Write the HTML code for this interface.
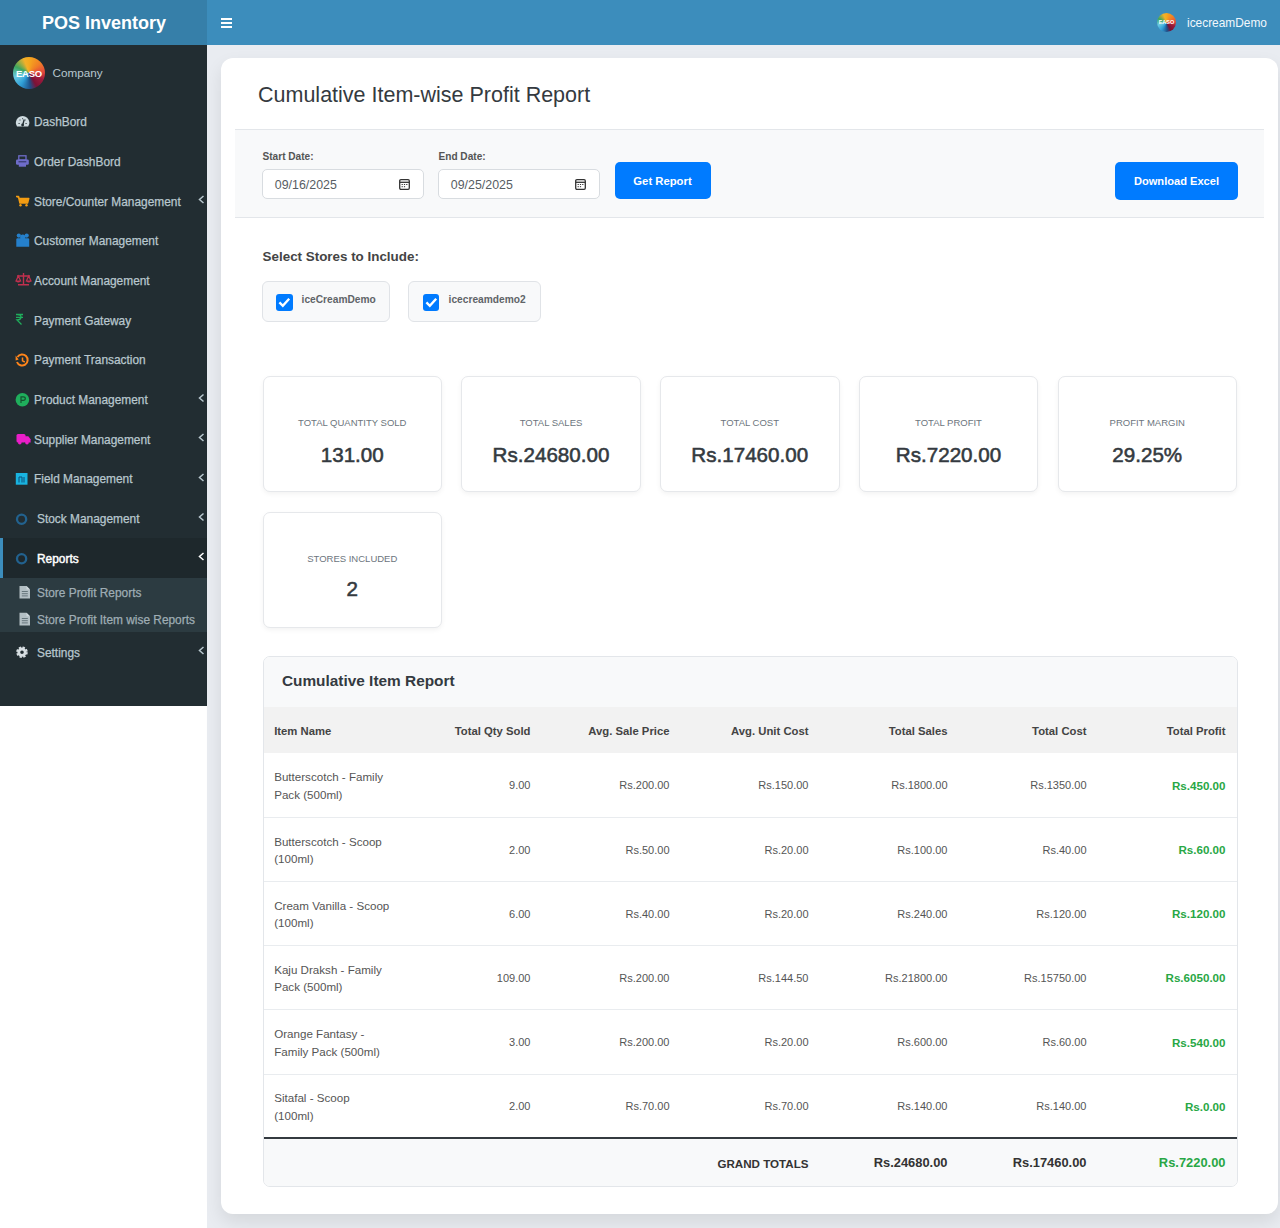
<!DOCTYPE html>
<html><head><meta charset="utf-8">
<style>
*{box-sizing:border-box;margin:0;padding:0}
html,body{width:1280px;height:1228px;overflow:hidden;background:#e9ecf1;font-family:"Liberation Sans",sans-serif}
.a{position:absolute;white-space:nowrap;line-height:1}
#logo{position:absolute;left:0;top:0;width:207px;height:45px;background:#367fa9}
#nav{position:absolute;left:207px;top:0;width:1073px;height:45px;background:#3c8dbc}
#side{position:absolute;left:0;top:45px;width:207px;height:661px;background:#222d32}
#below{position:absolute;left:0;top:706px;width:207px;height:522px;background:#fff}
.si{position:absolute;left:34px;font-size:11.9px;color:#b8c7ce;-webkit-text-stroke:0.25px currentColor;line-height:1;white-space:nowrap}
.chev{position:absolute;left:198px;width:6px;height:8px}
#card{position:absolute;left:221px;top:58px;width:1057px;height:1156px;background:#fff;border-radius:12px;box-shadow:0 8px 18px rgba(0,0,0,.09)}
#filter{position:absolute;left:235px;top:129px;width:1029px;height:89px;background:#f8f9fa;border-top:1px solid #e3e6ea;border-bottom:1px solid #e3e6ea}
.lbl{font-size:10.1px;font-weight:bold;color:#555}
.inp{position:absolute;top:169px;width:162px;height:30px;background:#fff;border:1px solid #d8dce0;border-radius:5px}
.btn{position:absolute;background:#007bff;border-radius:5px;color:#fff;font-weight:bold;text-align:center}
.chk{position:absolute;top:281px;height:40.5px;background:#f8f9fa;border:1px solid #e0e3e7;border-radius:6px}
.box{position:absolute;top:294px;width:16.5px;height:16.5px;background:#007bff;border-radius:3px}
.stat{position:absolute;width:179.5px;background:#fff;border:1px solid #e6e8eb;border-radius:7px;box-shadow:0 2px 5px rgba(0,0,0,.05)}
.sl{position:absolute;left:0;width:100%;text-align:center;font-size:9.5px;color:#6c757d;line-height:1}
.sv{position:absolute;left:0;width:100%;text-align:center;font-size:20.6px;font-weight:normal;-webkit-text-stroke:0.55px #343a40;color:#343a40;line-height:1}
#tcard{position:absolute;left:262.5px;top:655.5px;width:975px;height:531.5px;background:#fff;border:1px solid #e3e6ea;border-radius:7px;overflow:hidden}
.th{font-size:11.3px;font-weight:bold;color:#444}
.td{font-size:11.6px;color:#555}
.td.n{font-size:11px}
.td.g{font-size:11.6px;font-weight:bold;color:#28a745}
.tf{font-size:12.9px;font-weight:bold;color:#333}
.tf.g{color:#28a745}
</style></head><body>
<div id="logo"><div class="a" style="left:42px;top:14.3px;font-size:18px;font-weight:bold;color:#fff">POS Inventory</div></div>
<div id="nav">
  <div style="position:absolute;left:14px;top:18px;width:11px;height:2px;background:#fff"></div>
  <div style="position:absolute;left:14px;top:22px;width:11px;height:2px;background:#fff"></div>
  <div style="position:absolute;left:14px;top:26px;width:11px;height:2px;background:#fff"></div>
  <div style="position:absolute;left:950px;top:13px;width:19px;height:19px;border-radius:50%;overflow:hidden;background:conic-gradient(#f5a91e 0deg,#f07d26 50deg,#e34a3d 85deg,#9c1a3c 115deg,#7a1236 150deg,#1f4f88 175deg,#2f9fd8 215deg,#6ccbe2 255deg,#3da65e 295deg,#f3b02a 340deg,#f5a91e 360deg)"><div style="position:absolute;left:0;top:6.5px;width:19px;text-align:center;font-size:5.5px;font-weight:bold;color:#fff;line-height:1">EASO</div></div>
  <div class="a" style="left:980px;top:18.4px;font-size:11.9px;color:#f2f8fc">icecreamDemo</div>
</div>
<div id="side"></div>
<div id="below"></div>
<div id="sidebar-content">
  <div style="position:absolute;left:13px;top:57px;width:32px;height:32px;border-radius:50%;overflow:hidden;background:conic-gradient(#f5a91e 0deg,#f07d26 50deg,#e34a3d 85deg,#9c1a3c 115deg,#7a1236 150deg,#1f4f88 175deg,#2f9fd8 215deg,#6ccbe2 255deg,#3da65e 295deg,#f3b02a 340deg,#f5a91e 360deg)">
    <div style="position:absolute;left:0;top:12px;width:32px;text-align:center;font-size:9.5px;font-weight:bold;color:#fff;line-height:1;letter-spacing:-0.2px">EASO</div>
  </div>
  <div class="a" style="left:52.5px;top:67.2px;font-size:11.7px;color:#b8c7ce">Company</div>

  <!-- active Reports bg -->
  <div style="position:absolute;left:0;top:538px;width:207px;height:40px;background:#1e282c;border-left:3px solid #3c8dbc"></div>
  <div style="position:absolute;left:0;top:578px;width:207px;height:54px;background:#2c3b41"></div>

  <div class="si" style="top:117.1px">DashBord</div>
  <div class="si" style="top:156.8px">Order DashBord</div>
  <div class="si" style="top:196.5px">Store/Counter Management</div>
  <div class="si" style="top:236.2px">Customer Management</div>
  <div class="si" style="top:275.9px">Account Management</div>
  <div class="si" style="top:315.6px">Payment Gateway</div>
  <div class="si" style="top:355.3px">Payment Transaction</div>
  <div class="si" style="top:395.0px">Product Management</div>
  <div class="si" style="top:434.7px">Supplier Management</div>
  <div class="si" style="top:474.4px">Field Management</div>
  <div class="si" style="top:514.1px;left:37px">Stock Management</div>
  <div class="si" style="top:553.8px;left:37px;color:#fff;-webkit-text-stroke:0.45px #fff">Reports</div>
  <div class="si" style="top:587.5px;left:37px;color:#9fadb4">Store Profit Reports</div>
  <div class="si" style="top:614.5px;left:37px;color:#9fadb4">Store Profit Item wise Reports</div>
  <div class="si" style="top:647.5px;left:37px">Settings</div>

  <!-- icons -->
  <svg style="position:absolute;left:0;top:45px" width="207" height="661" viewBox="0 45 207 661">
    <!-- tachometer -->
    <path d="M17 126.6 A6.8 6.8 0 1 1 28.2 126.6 Z" fill="#cfdbe0"/>
    <path d="M22.6 125.5 L24.2 119.5" stroke="#222d32" stroke-width="1.3"/>
    <circle cx="22.6" cy="125" r="1.4" fill="#222d32"/>
    <path d="M18.5 123.5h1.2M19.5 120h1M22.6 118.2v1M25.7 120h-1M26.7 123.5h-1.2" stroke="#222d32" stroke-width="0.9"/>
    <!-- print -->
    <rect x="18.8" y="155.8" width="7.2" height="4.2" fill="none" stroke="#6e6cc9" stroke-width="1.3"/>
    <rect x="16" y="159.5" width="12.8" height="5.2" rx="1.2" fill="#6e6cc9"/>
    <rect x="18.5" y="161.3" width="7.8" height="1" fill="#2c2f5a"/>
    <rect x="18.8" y="163.5" width="7.2" height="3.2" fill="#6e6cc9"/>
    <!-- cart -->
    <path d="M16 196.5 L18.5 196.5 L20 203 L27.5 203 L28.7 198.5 L19 198.5" fill="#f39c12" stroke="#f39c12" stroke-width="1.6" stroke-linejoin="round"/>
    <circle cx="20.5" cy="205.3" r="1.2" fill="#f39c12"/><circle cx="26.5" cy="205.3" r="1.2" fill="#f39c12"/>
    <!-- users -->
    <circle cx="18.8" cy="235.6" r="2.1" fill="#2580cc"/><circle cx="26.7" cy="235.6" r="2.1" fill="#2580cc"/>
    <circle cx="22.75" cy="237.2" r="2.6" fill="#2580cc"/>
    <path d="M16.3 246.8 L16.3 239.5 Q16.3 238.3 17.5 238.3 L28 238.3 Q29.2 238.3 29.2 239.5 L29.2 246.8 Z" fill="#2580cc"/>
    <!-- balance -->
    <path d="M23.5 273 L23.5 285 M18 284.8 L29 284.8 M17 276 L30 276" stroke="#c0304e" stroke-width="1.4"/>
    <path d="M16 281 L18.3 276 L20.6 281 Z M26.4 281 L28.7 276 L31 281 Z" fill="none" stroke="#c0304e" stroke-width="1.2"/>
    <path d="M15.8 281 Q18.3 284 20.8 281 Z M26.2 281 Q28.7 284 31.2 281 Z" fill="#c0304e"/>
    <!-- rupee -->
    <path d="M16 314.5 L23 314.5 M16 317.3 L23 317.3 M17 314.5 Q21.5 314.5 21 317.5 Q20.5 320 17 320 L21.5 324.5" fill="none" stroke="#1fae5c" stroke-width="1.3"/>
    <!-- history -->
    <path d="M17.5 357 A5.5 5.5 0 1 1 17 362" fill="none" stroke="#ff851b" stroke-width="2"/>
    <path d="M15.6 355.5 L18.6 359.5 L15.6 360.5 Z" fill="#ff851b"/>
    <path d="M22.5 357.5 L22.5 360.8 L24.8 362" fill="none" stroke="#ff851b" stroke-width="1.5"/>
    <!-- product P -->
    <circle cx="22.4" cy="399.8" r="6.8" fill="#1fae5c"/>
    <path d="M21 403 L21 396.8 L23.3 396.8 Q25.3 396.8 25.3 398.6 Q25.3 400.4 23.3 400.4 L21 400.4" fill="none" stroke="#15512f" stroke-width="1.2"/>
    <!-- truck -->
    <rect x="16.5" y="434" width="9" height="8.5" rx="1.5" fill="#e91ec8"/>
    <path d="M25 436.3 L28.3 436.3 L30.6 439.3 L30.6 442.5 L25 442.5 Z" fill="#e91ec8"/>
    <circle cx="19.8" cy="442.8" r="1.8" fill="#e91ec8"/><circle cx="27" cy="442.8" r="1.8" fill="#e91ec8"/>
    <!-- field -->
    <rect x="15.8" y="473" width="11.7" height="11.7" fill="#19b3e0"/>
    <path d="M19 482.5 L19 477 L22 477 L22 482.5 M24 477 L24 482.5" fill="none" stroke="#0d4f7a" stroke-width="1"/>
    <!-- circles -->
    <circle cx="21.6" cy="519.2" r="4.6" fill="none" stroke="#22628f" stroke-width="2.3"/>
    <circle cx="21.6" cy="558.8" r="4.6" fill="none" stroke="#22628f" stroke-width="2.3"/>
    <!-- files -->
    <path d="M19.5 586 L26.5 586 L30 589.5 L30 598.4 L19.5 598.4 Z" fill="#b3bfc4"/>
    <path d="M21.8 591.5 L27.8 591.5 M21.8 593.7 L27.8 593.7 M21.8 595.9 L27.8 595.9" stroke="#5d6d74" stroke-width="0.9"/><path d="M26.5 586 L26.5 589.5 L30 589.5" fill="#cfd8dc"/>
    <path d="M19.5 612.8 L26.5 612.8 L30 616.3 L30 625.6 L19.5 625.6 Z" fill="#b3bfc4"/>
    <path d="M21.8 618.5 L27.8 618.5 M21.8 620.7 L27.8 620.7 M21.8 622.9 L27.8 622.9" stroke="#5d6d74" stroke-width="0.9"/><path d="M26.5 612.8 L26.5 616.3 L30 616.3" fill="#cfd8dc"/>
    <!-- gear -->
    <circle cx="22" cy="652.2" r="4.2" fill="none" stroke="#d7dee2" stroke-width="3.2" stroke-dasharray="2 1.3"/>
    <circle cx="22" cy="652.2" r="3.2" fill="none" stroke="#d7dee2" stroke-width="2.8"/>
    <!-- chevrons -->
    <g fill="none" stroke="#b8c7ce" stroke-width="1.5">
      <path d="M203.5 196 L199.5 199.5 L203.5 203"/>
      <path d="M203.5 394.5 L199.5 398 L203.5 401.5"/>
      <path d="M203.5 434 L199.5 437.5 L203.5 441"/>
      <path d="M203.5 474 L199.5 477.5 L203.5 481"/>
      <path d="M203.5 513.5 L199.5 517 L203.5 520.5"/>
      <path d="M203.5 553 L199.5 556.5 L203.5 560" stroke="#fff"/>
      <path d="M203.5 647 L199.5 650.5 L203.5 654"/>
    </g>
  </svg>
</div>

<div id="card"></div>
<div id="filter"></div>
<div class="a" style="left:258px;top:84.7px;font-size:21.5px;color:#343a40">Cumulative Item-wise Profit Report</div>
<div class="a lbl" style="left:262.5px;top:152px">Start Date:</div>
<div class="a lbl" style="left:438.5px;top:152px">End Date:</div>
<div class="inp" style="left:262px"></div>
<div class="inp" style="left:438px"></div>
<div class="a" style="left:274.8px;top:179px;font-size:12.4px;color:#575d63">09/16/2025</div>
<div class="a" style="left:450.8px;top:179px;font-size:12.4px;color:#575d63">09/25/2025</div>
<svg style="position:absolute;left:399px;top:179px" width="11" height="11" viewBox="0 0 11 11"><rect x="0.7" y="0.7" width="9.6" height="9.6" rx="1.2" fill="none" stroke="#333" stroke-width="1.3"/><path d="M0.7 3.3 H10.3" stroke="#333" stroke-width="1.3"/><path d="M2.6 5.5h1.2M4.9 5.5h1.2M7.2 5.5h1.2M2.6 7.7h1.2M4.9 7.7h1.2" stroke="#333" stroke-width="1"/></svg>
<svg style="position:absolute;left:575px;top:179px" width="11" height="11" viewBox="0 0 11 11"><rect x="0.7" y="0.7" width="9.6" height="9.6" rx="1.2" fill="none" stroke="#333" stroke-width="1.3"/><path d="M0.7 3.3 H10.3" stroke="#333" stroke-width="1.3"/><path d="M2.6 5.5h1.2M4.9 5.5h1.2M7.2 5.5h1.2M2.6 7.7h1.2M4.9 7.7h1.2" stroke="#333" stroke-width="1"/></svg>
<div class="btn" style="left:614.5px;top:162px;width:96px;height:37px;font-size:11.3px;line-height:38.5px">Get Report</div>
<div class="btn" style="left:1115px;top:162px;width:123px;height:38px;font-size:11.1px;line-height:38.5px">Download Excel</div>

<div class="a" style="left:262.6px;top:250.3px;font-size:13.4px;font-weight:bold;color:#444">Select Stores to Include:</div>
<div class="chk" style="left:262px;width:128px"></div>
<div class="chk" style="left:408px;width:132.6px"></div>
<div class="box" style="left:276px"><svg width="16.5" height="16.5" viewBox="0 0 16 16"><path d="M3.3 8.2 L6.6 11.4 L12.8 4.6" fill="none" stroke="#fff" stroke-width="2.3"/></svg></div>
<div class="box" style="left:422.7px"><svg width="16.5" height="16.5" viewBox="0 0 16 16"><path d="M3.3 8.2 L6.6 11.4 L12.8 4.6" fill="none" stroke="#fff" stroke-width="2.3"/></svg></div>
<div class="a" style="left:301.6px;top:294.6px;font-size:10.2px;font-weight:bold;color:#606468">iceCreamDemo</div>
<div class="a" style="left:448.6px;top:294.6px;font-size:10.2px;font-weight:bold;color:#606468">icecreamdemo2</div>

<div class="stat" style="left:262.50px;top:376px;height:116px"><div class="sl" style="top:40.7px">TOTAL QUANTITY SOLD</div><div class="sv" style="top:68px">131.00</div></div>
<div class="stat" style="left:461.25px;top:376px;height:116px"><div class="sl" style="top:40.7px">TOTAL SALES</div><div class="sv" style="top:68px">Rs.24680.00</div></div>
<div class="stat" style="left:660.00px;top:376px;height:116px"><div class="sl" style="top:40.7px">TOTAL COST</div><div class="sv" style="top:68px">Rs.17460.00</div></div>
<div class="stat" style="left:858.75px;top:376px;height:116px"><div class="sl" style="top:40.7px">TOTAL PROFIT</div><div class="sv" style="top:68px">Rs.7220.00</div></div>
<div class="stat" style="left:1057.50px;top:376px;height:116px"><div class="sl" style="top:40.7px">PROFIT MARGIN</div><div class="sv" style="top:68px">29.25%</div></div>
<div class="stat" style="left:262.5px;top:512px;height:115.5px"><div class="sl" style="top:40.5px">STORES INCLUDED</div><div class="sv" style="top:66px">2</div></div>

<div id="tcard">
<div style="position:absolute;left:0;top:0;width:100%;height:51px;background:#f8f9fa;border-bottom:1px solid #e3e6ea"></div>
<div class="a" style="left:18.4px;top:16.3px;font-size:15.4px;font-weight:bold;color:#343a40">Cumulative Item Report</div>
<div style="position:absolute;left:0;top:50.5px;width:100%;height:46px;background:#f2f2f2"></div>
<div class="a th" style="left:10.7px;top:69.2px">Item Name</div>
<div class="a th" style="right:706.0px;top:69.2px">Total Qty Sold</div>
<div class="a th" style="right:567.0px;top:69.2px">Avg. Sale Price</div>
<div class="a th" style="right:428.0px;top:69.2px">Avg. Unit Cost</div>
<div class="a th" style="right:289.0px;top:69.2px">Total Sales</div>
<div class="a th" style="right:150.0px;top:69.2px">Total Cost</div>
<div class="a th" style="right:11.0px;top:69.2px">Total Profit</div>
<div class="a td" style="left:10.7px;top:114.9px">Butterscotch - Family</div>
<div class="a td" style="left:10.7px;top:132.3px">Pack (500ml)</div>
<div class="a td n" style="right:706.0px;top:123.8px">9.00</div>
<div class="a td n" style="right:567.0px;top:123.8px">Rs.200.00</div>
<div class="a td n" style="right:428.0px;top:123.8px">Rs.150.00</div>
<div class="a td n" style="right:289.0px;top:123.8px">Rs.1800.00</div>
<div class="a td n" style="right:150.0px;top:123.8px">Rs.1350.00</div>
<div class="a td g" style="right:11.0px;top:123.3px">Rs.450.00</div>
<div style="position:absolute;left:0;top:160.2px;width:100%;height:1px;background:#e9ecef"></div>
<div class="a td" style="left:10.7px;top:179.1px">Butterscotch - Scoop</div>
<div class="a td" style="left:10.7px;top:196.5px">(100ml)</div>
<div class="a td n" style="right:706.0px;top:188.0px">2.00</div>
<div class="a td n" style="right:567.0px;top:188.0px">Rs.50.00</div>
<div class="a td n" style="right:428.0px;top:188.0px">Rs.20.00</div>
<div class="a td n" style="right:289.0px;top:188.0px">Rs.100.00</div>
<div class="a td n" style="right:150.0px;top:188.0px">Rs.40.00</div>
<div class="a td g" style="right:11.0px;top:187.5px">Rs.60.00</div>
<div style="position:absolute;left:0;top:224.4px;width:100%;height:1px;background:#e9ecef"></div>
<div class="a td" style="left:10.7px;top:243.3px">Cream Vanilla - Scoop</div>
<div class="a td" style="left:10.7px;top:260.7px">(100ml)</div>
<div class="a td n" style="right:706.0px;top:252.2px">6.00</div>
<div class="a td n" style="right:567.0px;top:252.2px">Rs.40.00</div>
<div class="a td n" style="right:428.0px;top:252.2px">Rs.20.00</div>
<div class="a td n" style="right:289.0px;top:252.2px">Rs.240.00</div>
<div class="a td n" style="right:150.0px;top:252.2px">Rs.120.00</div>
<div class="a td g" style="right:11.0px;top:251.7px">Rs.120.00</div>
<div style="position:absolute;left:0;top:288.6px;width:100%;height:1px;background:#e9ecef"></div>
<div class="a td" style="left:10.7px;top:307.5px">Kaju Draksh - Family</div>
<div class="a td" style="left:10.7px;top:324.9px">Pack (500ml)</div>
<div class="a td n" style="right:706.0px;top:316.4px">109.00</div>
<div class="a td n" style="right:567.0px;top:316.4px">Rs.200.00</div>
<div class="a td n" style="right:428.0px;top:316.4px">Rs.144.50</div>
<div class="a td n" style="right:289.0px;top:316.4px">Rs.21800.00</div>
<div class="a td n" style="right:150.0px;top:316.4px">Rs.15750.00</div>
<div class="a td g" style="right:11.0px;top:315.9px">Rs.6050.00</div>
<div style="position:absolute;left:0;top:352.8px;width:100%;height:1px;background:#e9ecef"></div>
<div class="a td" style="left:10.7px;top:371.7px">Orange Fantasy -</div>
<div class="a td" style="left:10.7px;top:389.1px">Family Pack (500ml)</div>
<div class="a td n" style="right:706.0px;top:380.6px">3.00</div>
<div class="a td n" style="right:567.0px;top:380.6px">Rs.200.00</div>
<div class="a td n" style="right:428.0px;top:380.6px">Rs.20.00</div>
<div class="a td n" style="right:289.0px;top:380.6px">Rs.600.00</div>
<div class="a td n" style="right:150.0px;top:380.6px">Rs.60.00</div>
<div class="a td g" style="right:11.0px;top:380.1px">Rs.540.00</div>
<div style="position:absolute;left:0;top:417.0px;width:100%;height:1px;background:#e9ecef"></div>
<div class="a td" style="left:10.7px;top:435.9px">Sitafal - Scoop</div>
<div class="a td" style="left:10.7px;top:453.3px">(100ml)</div>
<div class="a td n" style="right:706.0px;top:444.8px">2.00</div>
<div class="a td n" style="right:567.0px;top:444.8px">Rs.70.00</div>
<div class="a td n" style="right:428.0px;top:444.8px">Rs.70.00</div>
<div class="a td n" style="right:289.0px;top:444.8px">Rs.140.00</div>
<div class="a td n" style="right:150.0px;top:444.8px">Rs.140.00</div>
<div class="a td g" style="right:11.0px;top:444.3px">Rs.0.00</div>
<div style="position:absolute;left:0;top:480.8px;width:100%;height:2px;background:#343a40"></div>
<div style="position:absolute;left:0;top:482.8px;width:100%;height:60px;background:#f8f9fa"></div>
<div class="a tf" style="font-size:11.6px;right:428.0px;top:501.4px">GRAND TOTALS</div>
<div class="a tf" style="right:289.0px;top:500.2px">Rs.24680.00</div>
<div class="a tf" style="right:150.0px;top:500.2px">Rs.17460.00</div>
<div class="a tf g" style="right:11.0px;top:500.2px">Rs.7220.00</div>
</div>
</body></html>
